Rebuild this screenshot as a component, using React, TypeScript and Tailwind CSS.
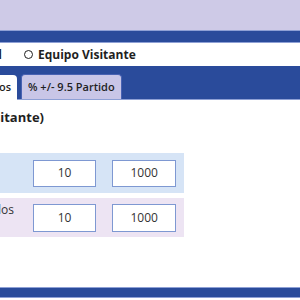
import React from "react";

function Radio() {
  return <span className="inline-block w-[9px] h-[9px] rounded-full border-[1.5px] border-[#1f1f1f] bg-white" />;
}

export default function App() {
  return (
    <div
      className="w-[300px] h-[300px] overflow-hidden bg-white flex flex-col text-[#1f1f1f]"
      style={{ fontFamily: '"Open Sans", "Liberation Sans", sans-serif' }}
    >
      <div className="h-[30px] bg-[#cecae7] shrink-0" />
      <div className="h-[13px] bg-[#2a4b9b] border-t border-b border-[#8ea0d5] shrink-0" />
      <div className="h-[23px] flex items-center shrink-0">
        <div className="w-[2px] flex justify-end items-center">
          <div className="flex items-center gap-[5px] whitespace-nowrap text-[12px] font-bold">
            <Radio />
            <span>Equipo Local</span>
          </div>
        </div>
        <div className="ml-[22px] flex items-center gap-[5px] whitespace-nowrap text-[12px] font-bold">
          <Radio />
          <span>Equipo Visitante</span>
        </div>
      </div>
      <div className="h-[34px] bg-[#2a4b9b] border-b border-[#8ea0d5] flex items-end gap-[4px] shrink-0">
        <div className="w-[17px] h-[25px] bg-white rounded-tr-[4px] flex justify-end items-center pr-[6px] -mb-px">
          <span className="whitespace-nowrap text-[11px] font-semibold">Goles Equipos</span>
        </div>
        <div className="h-[25px] bg-[#c9c6e7] border border-b-0 border-[#4862b2] rounded-t-[4px] px-[6px] flex items-center">
          <span className="whitespace-nowrap text-[11px] font-semibold">% +/- 9.5 Partido</span>
        </div>
      </div>
      <div className="pt-[8px] flex">
        <div className="w-[44px] flex justify-end">
          <span className="whitespace-nowrap text-[13px] font-bold leading-[18px]">Goles (Equipo Visitante)</span>
        </div>
      </div>
      <div className="mt-[27px] flex flex-col gap-[5px] w-[184px]">
        <div className="h-[40px] bg-[#d6e4f6] flex items-center pr-[8px]">
          <div className="w-[33px]" />
          <div className="w-[64px] h-[27px] bg-white border border-[#7e98d2] flex items-center justify-center text-[12px] text-[#333]">10</div>
          <div className="ml-[16px] w-[64px] h-[27px] bg-white border border-[#7e98d2] flex items-center justify-center text-[12px] text-[#333]">1000</div>
        </div>
        <div className="h-[39px] bg-[#ede4f3] flex items-center pr-[8px]">
          <div className="w-[33px] self-start pt-[3px] flex">
            <div className="w-[14px] flex justify-end">
              <span className="whitespace-nowrap text-[12px] text-[#333]">Esperados</span>
            </div>
          </div>
          <div className="w-[64px] h-[28px] bg-white border border-[#7e98d2] flex items-center justify-center text-[12px] text-[#333]">10</div>
          <div className="ml-[16px] w-[64px] h-[28px] bg-white border border-[#7e98d2] flex items-center justify-center text-[12px] text-[#333]">1000</div>
        </div>
      </div>
      <div className="mt-[50px] h-[11px] bg-[#2a4b9b] border-t border-b border-[#8ea0d5] shrink-0" />
    </div>
  );
}
